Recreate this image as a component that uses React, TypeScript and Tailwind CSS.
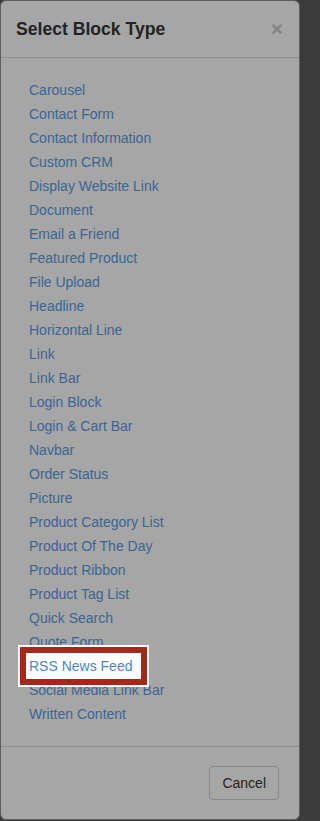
const BLOCK_TYPES = [
  'Carousel',
  'Contact Form',
  'Contact Information',
  'Custom CRM',
  'Display Website Link',
  'Document',
  'Email a Friend',
  'Featured Product',
  'File Upload',
  'Headline',
  'Horizontal Line',
  'Link',
  'Link Bar',
  'Login Block',
  'Login & Cart Bar',
  'Navbar',
  'Order Status',
  'Picture',
  'Product Category List',
  'Product Of The Day',
  'Product Ribbon',
  'Product Tag List',
  'Quick Search',
  'Quote Form',
  'RSS News Feed',
  'Social Media Link Bar',
  'Written Content',
];

const HIGHLIGHTED = 'RSS News Feed';

function BlockItem({ name }: { name: string }) {
  if (name !== HIGHLIGHTED) {
    return (
      <li className="h-[24px] leading-[24px]">
        <a className="text-[#3b6593] cursor-pointer">{name}</a>
      </li>
    );
  }
  // annotated item: white box with red frame drawn over the row
  return (
    <li className="h-[24px] leading-[24px]">
      <span className="relative inline-block">
        <span className="absolute -left-[11px] -top-[9px] w-[131px] h-[42px] border-2 border-white z-0">
          <span className="block w-full h-full border-[6px] border-[#a3291b] bg-white" />
        </span>
        <a className="relative z-10 text-[#4a86c6] cursor-pointer">{name}</a>
      </span>
    </li>
  );
}

export default function App() {
  return (
    <div className="min-h-screen bg-[#3b3b3b]" style={{ fontFamily: '"Liberation Sans", Arial, sans-serif' }}>
      <div className="w-full max-w-[300px] rounded-[6px] border border-[#5e5e5e] bg-[#a6a6a6] overflow-hidden">
        {/* Header */}
        <div className="flex items-start justify-between px-[15px] py-[15px] border-b border-[#8f8f8f]">
          <h4 className="text-[17.6px] leading-[26px] font-bold text-[#232323]">Select Block Type</h4>
          <button className="mt-[2px] mr-[1px] text-[21px] leading-none font-bold text-[#858585]">×</button>
        </div>

        {/* Body */}
        <ul className="pt-[20px] pb-[20px] pl-[28px] text-[14px]">
          {BLOCK_TYPES.map(name => (
            <BlockItem key={name} name={name} />
          ))}
        </ul>

        {/* Footer */}
        <div className="flex justify-end pt-[19px] pb-[19px] pr-[20px] border-t border-[#8f8f8f]">
          <button className="h-[34px] px-[12px] rounded-[4px] border border-[#878787] text-[14px] text-[#222]">
            Cancel
          </button>
        </div>
      </div>
    </div>
  );
}
